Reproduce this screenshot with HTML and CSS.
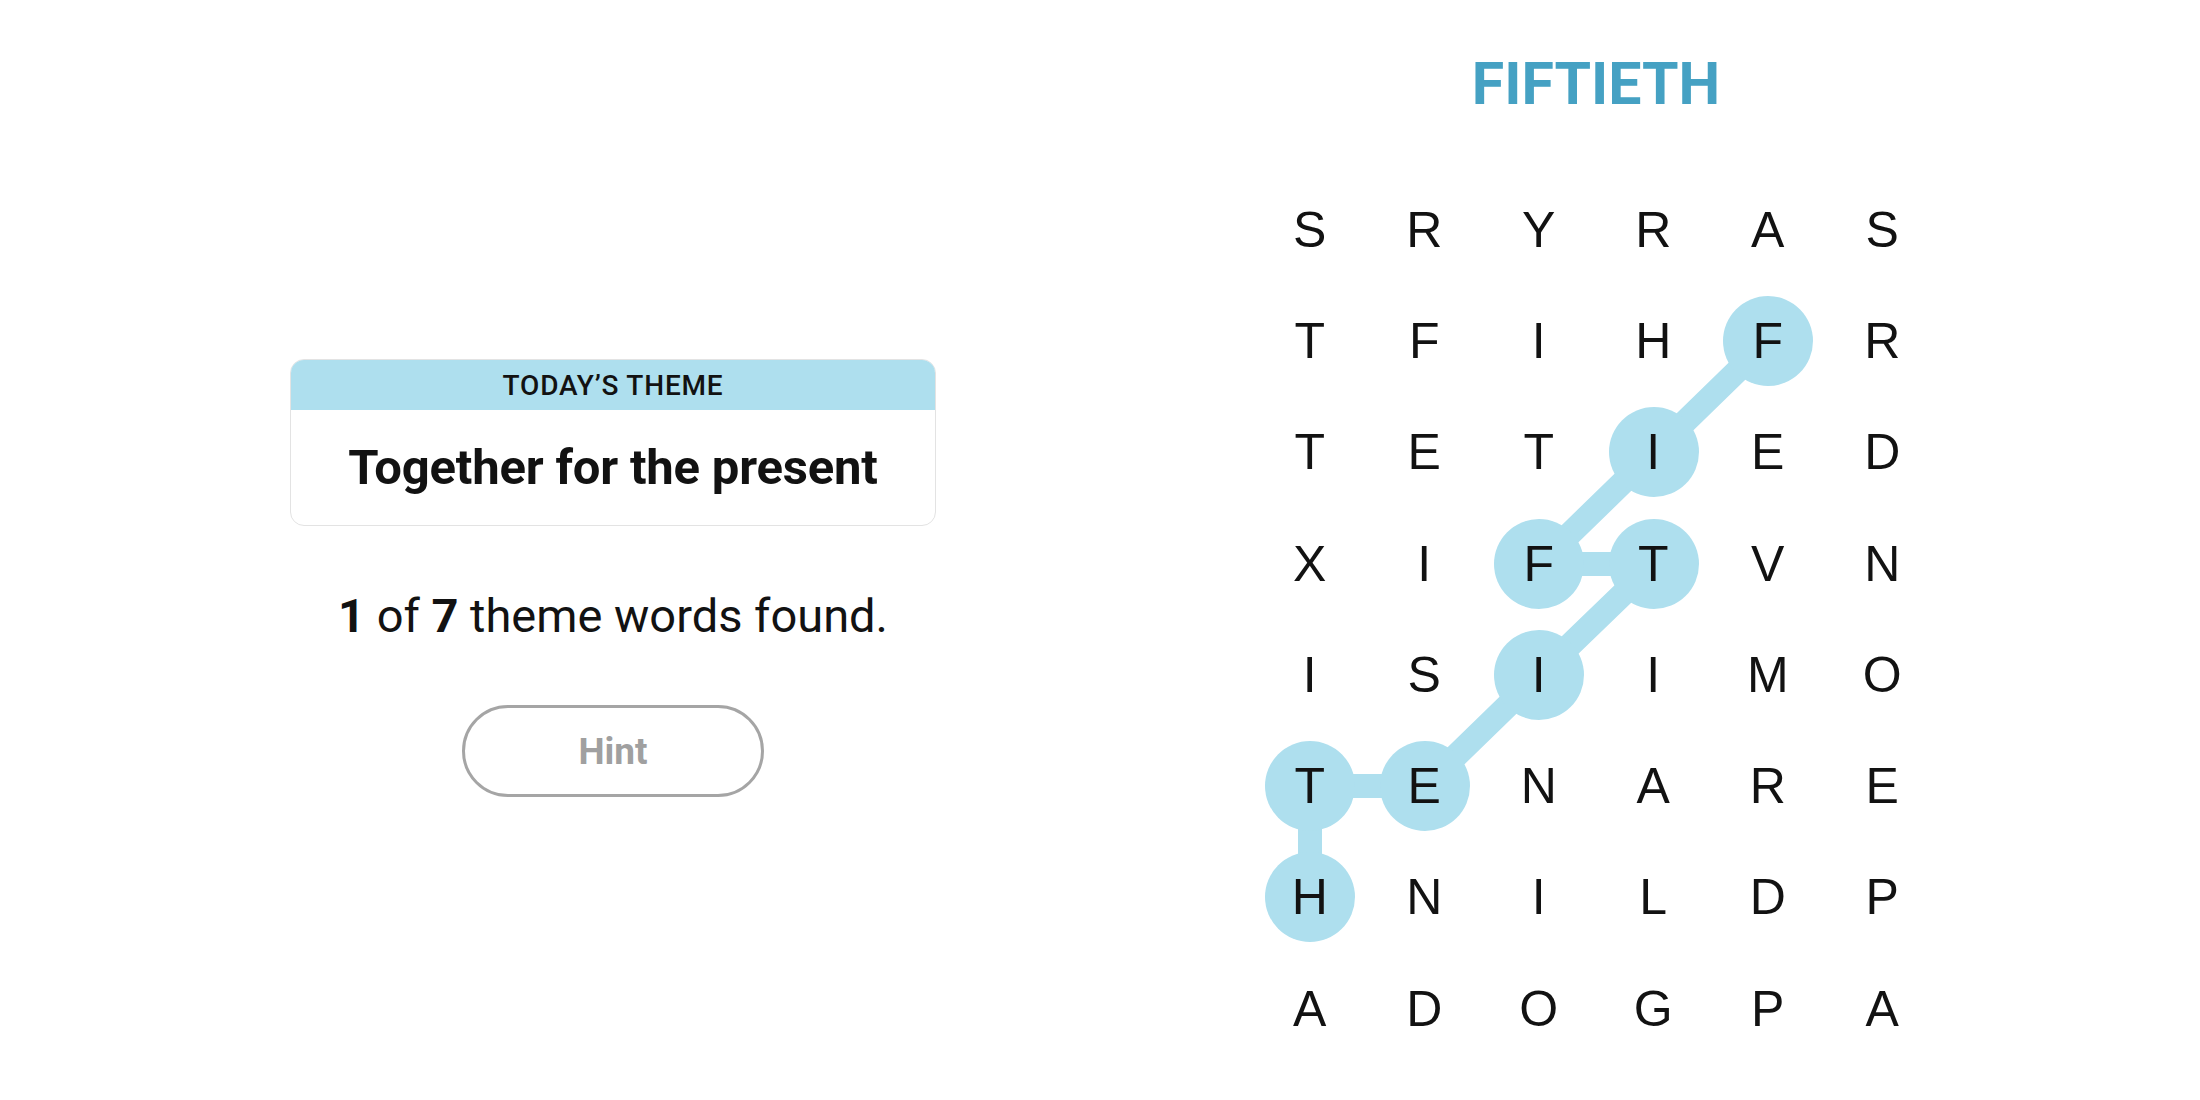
FILE: index.html
```html
<!DOCTYPE html>
<html lang="en">
<head>
  <meta charset="UTF-8" />
  <title>Strands - FIFTIETH</title>
  <link rel="stylesheet" href="styles.css">
</head>
<body>

  <div class="page">

    <section class="side">
      <div class="theme-card">
        <div class="theme-label">TODAY’S THEME</div>
        <div class="theme-text">Together for the present</div>
      </div>
      <p class="progress"><b>1</b> of <b>7</b> theme words found.</p>
      <button class="hint">Hint</button>
    </section>

    <section class="play">
      <h1 class="found-word">FIFTIETH</h1>

      <div class="board">
        <!-- found word path, drawn under the letters -->
        <svg class="path" viewBox="0 0 687 890" width="687" height="890">
          <polyline points="515,167 401,278 286,390 401,390 286,501 172,612 57,612 57,723"
                    fill="none" stroke="#aedfee" stroke-width="24" stroke-linejoin="round" />
          <circle cx="515" cy="167" r="45" fill="#aedfee" />
          <circle cx="401" cy="278" r="45" fill="#aedfee" />
          <circle cx="286" cy="390" r="45" fill="#aedfee" />
          <circle cx="401" cy="390" r="45" fill="#aedfee" />
          <circle cx="286" cy="501" r="45" fill="#aedfee" />
          <circle cx="172" cy="612" r="45" fill="#aedfee" />
          <circle cx="57" cy="612" r="45" fill="#aedfee" />
          <circle cx="57" cy="723" r="45" fill="#aedfee" />
        </svg>

        <span>S</span><span>R</span><span>Y</span><span>R</span><span>A</span><span>S</span>
        <span>T</span><span>F</span><span>I</span><span>H</span><span>F</span><span>R</span>
        <span>T</span><span>E</span><span>T</span><span>I</span><span>E</span><span>D</span>
        <span>X</span><span>I</span><span>F</span><span>T</span><span>V</span><span>N</span>
        <span>I</span><span>S</span><span>I</span><span>I</span><span>M</span><span>O</span>
        <span>T</span><span>E</span><span>N</span><span>A</span><span>R</span><span>E</span>
        <span>H</span><span>N</span><span>I</span><span>L</span><span>D</span><span>P</span>
        <span>A</span><span>D</span><span>O</span><span>G</span><span>P</span><span>A</span>
      </div>
    </section>

  </div>

</body>
</html>
```

FILE: styles.css
```css
body {
  margin: 0;
  font-family: Roboto, 'Liberation Sans', sans-serif;
  background: #ffffff;
  color: #121212;
}

.page {
  display: flex;
  height: 1100px;
}

/* Left column: theme + progress + hint */
.side {
  width: 1226px;
  display: flex;
  flex-direction: column;
  align-items: center;
  padding-top: 359px;
  box-sizing: border-box;
}

.theme-card {
  width: 646px;
  border: 1px solid #e3e3e3;
  border-radius: 14px;
  overflow: hidden;
  box-sizing: border-box;
}

.theme-label {
  background-color: #aedfee;
  height: 50px;
  display: flex;
  align-items: center;
  justify-content: center;
  font-size: 28px;
  font-weight: 500;
  letter-spacing: 0.8px;
  color: #121212;
}

.theme-text {
  height: 115px;
  display: flex;
  align-items: center;
  justify-content: center;
  font-size: 49px;
  font-weight: bold;
  letter-spacing: -0.2px;
  color: #121212;
}

.progress {
  margin: 62px 0 0;
  font-size: 47px;
  line-height: 1.2;
  color: #121212;
}

.progress b {
  font-weight: bold;
}

.hint {
  margin-top: 61px;
  width: 302px;
  height: 92px;
  border: 3px solid #a5a5a5;
  border-radius: 46px;
  background: white;
  color: #a0a0a0;
  font-family: Roboto, 'Liberation Sans', sans-serif;
  font-size: 37px;
  font-weight: bold;
  cursor: pointer;
}

/* Right column: found word + letter board */
.play {
  width: 740px;
  display: flex;
  flex-direction: column;
  align-items: center;
}

.found-word {
  margin: 54px 0 0;
  font-size: 59px;
  line-height: 1;
  font-weight: bold;
  color: #45a1c3;
}

.board {
  position: relative;
  margin-top: 61px;
  display: grid;
  grid-template-columns: repeat(6, 114.5px);
  grid-auto-rows: 111.3px;
}

.board .path {
  position: absolute;
  top: 0;
  left: 0;
}

.board span {
  position: relative;
  display: flex;
  align-items: center;
  justify-content: center;
  font-family: 'Liberation Sans', Arial, sans-serif;
  font-size: 50px;
  color: #121212;
}
```
